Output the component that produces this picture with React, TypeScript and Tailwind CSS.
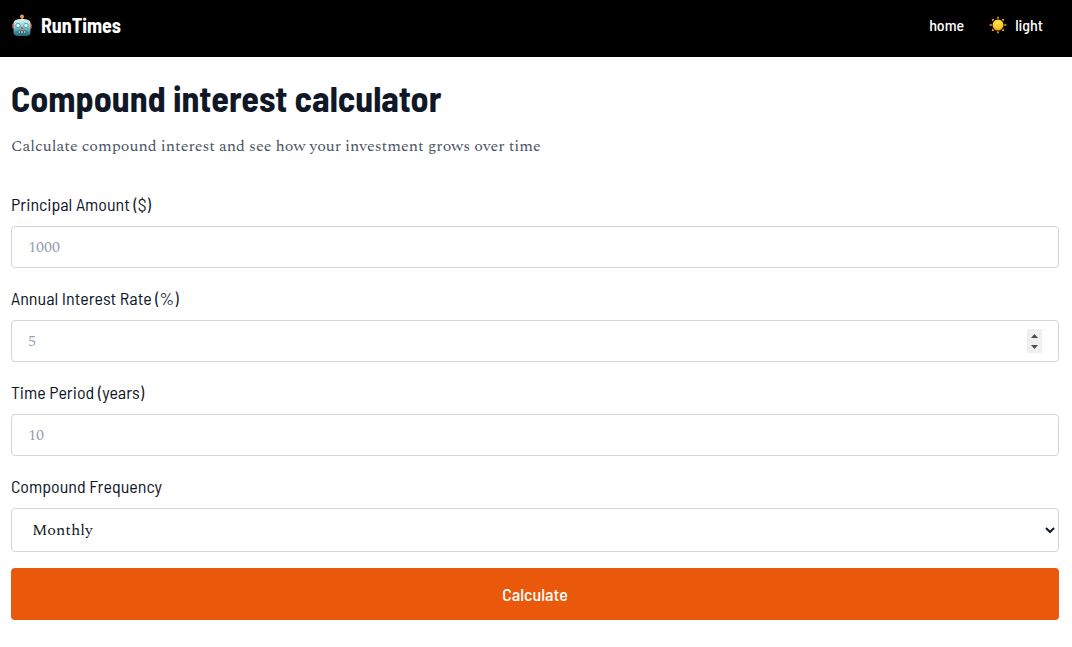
import React, { useState } from "react";

const sans = "font-['Barlow_Semi_Condensed','Liberation_Sans',sans-serif]";
const serif = "font-['Spectral','Liberation_Serif',serif]";
const field =
  "block w-full rounded border border-gray-300 bg-white px-4 py-2 leading-6 text-gray-900 placeholder:text-gray-400";

function Robot() {
  return (
    <svg viewBox="0 0 22 24" className="h-6 w-[22px]" aria-hidden="true">
      <defs>
        <linearGradient id="face" x1="0" y1="0" x2="0" y2="1">
          <stop offset="0" stopColor="#e2f2f0" />
          <stop offset="0.45" stopColor="#9ccdd0" />
          <stop offset="0.75" stopColor="#4593a3" />
          <stop offset="1" stopColor="#1f6477" />
        </linearGradient>
      </defs>
      <rect x="10" y="4" width="2" height="3" fill="#8a6a3a" />
      <circle cx="11" cy="3.500" r="2" fill="#e4a32d" />
      <rect x="1" y="10.500" width="3" height="5" rx="1" fill="#b8322c" />
      <rect x="18" y="10.500" width="3" height="5" rx="1" fill="#b8322c" />
      <path d="M2.500 10.500C2.500 7 6 6 11 6s8.500 1 8.500 4.500v8.500c0 3-2 4-4 4h-9c-2 0-4-1-4-4Z" fill="url(#face)" />
      <circle cx="7" cy="12.500" r="2.500" fill="#2b9fb6" />
      <circle cx="15" cy="12.500" r="2.500" fill="#2b9fb6" />
      <circle cx="7" cy="12.500" r="1.700" fill="#e6ffff" />
      <circle cx="15" cy="12.500" r="1.700" fill="#e6ffff" />
      <path d="m11 13.500 1.500 2.300h-3Z" fill="#d52f32" />
      <rect x="6.500" y="17.500" width="9" height="2.800" rx="1" fill="#315966" />
      <path d="M7.500 19h1.500m1 0h2m1 0h1.500" stroke="#d9d3c4" strokeWidth="1.500" />
    </svg>
  );
}

function Sun() {
  return (
    <svg viewBox="0 0 18 18" className="size-[18px]" aria-hidden="true">
      <defs>
        <radialGradient id="disc" cx=".5" cy=".3" r=".75">
          <stop offset="0" stopColor="#ffe94e" />
          <stop offset="0.6" stopColor="#ffc928" />
          <stop offset="1" stopColor="#ef991b" />
        </radialGradient>
      </defs>
      <circle cx="9" cy="9" r="5.500" fill="url(#disc)" />
      <g fill="#f0a92d">
        {[0, 45, 90, 135, 180, 225, 270, 315].map((angle) => (
          <path key={angle} d="M9 0 10.300 2.600H7.700Z" transform={`rotate(${angle} 9 9)`} />
        ))}
      </g>
    </svg>
  );
}

function Stepper() {
  return (
    <svg
      viewBox="0 0 15 24"
      className="pointer-events-none absolute right-[17px] top-[9px] h-6 w-[15px]"
      aria-hidden="true"
    >
      <rect width="15" height="24" fill="#efefef" />
      <path d="M4 9 7.500 5 11 9Z M4 16 7.500 20 11 16Z" fill="#4d4d4d" />
    </svg>
  );
}

function NumberField({ id, label, placeholder, spinner = false }: { id: string; label: string; placeholder: string; spinner?: boolean }) {
  return (
    <div>
      <label htmlFor={id} className={`mb-2 block text-lg leading-7 text-gray-900 ${sans}`}>{label}</label>
      <div className="relative">
        <input id={id} type="number" placeholder={placeholder} className={field} />
        {spinner && <Stepper />}
      </div>
    </div>
  );
}

export default function App() {
  const [frequency, setFrequency] = useState("Monthly");
  return (
    <div className={`min-h-screen bg-white text-base text-gray-900 ${serif}`}>
      <header className={`flex h-[57px] items-center justify-between bg-black pb-[7px] pl-[11px] pr-[29px] text-white ${sans}`}>
        <a href="#" className="flex items-center gap-2 text-xl font-bold leading-7"><Robot />RunTimes</a>
        <nav className="flex items-center gap-[25px] text-base font-medium">
          <a href="#">home</a>
          <button type="button" className="flex items-center gap-2"><Sun />light</button>
        </nav>
      </header>
      <main className="pb-7 pl-[11px] pr-[13px] pt-[21px]">
        <h1 className={`text-4xl font-bold leading-10 ${sans}`}>Compound interest calculator</h1>
        <p className="mb-8 mt-4 leading-6 text-gray-600">Calculate compound interest and see how your investment grows over time</p>
        <form className="flex flex-col gap-4" onSubmit={(e) => e.preventDefault()}>
          <NumberField id="principal" label="Principal Amount ($)" placeholder="1000" />
          <NumberField id="rate" label="Annual Interest Rate (%)" placeholder="5" spinner />
          <NumberField id="years" label="Time Period (years)" placeholder="10" />
          <div>
            <label htmlFor="frequency" className={`mb-2 block text-lg leading-7 ${sans}`}>Compound Frequency</label>
            <select
              id="frequency"
              value={frequency}
              onChange={(e) => setFrequency(e.target.value)}
              className="block h-11 w-full rounded border border-gray-300 bg-white px-4"
            >
              <option>Monthly</option>
              <option>Quarterly</option>
              <option>Annually</option>
            </select>
          </div>
          <button type="submit" className={`rounded bg-[#ea580c] p-3 text-lg font-medium leading-7 text-white ${sans}`}>Calculate</button>
        </form>
      </main>
    </div>
  );
}
